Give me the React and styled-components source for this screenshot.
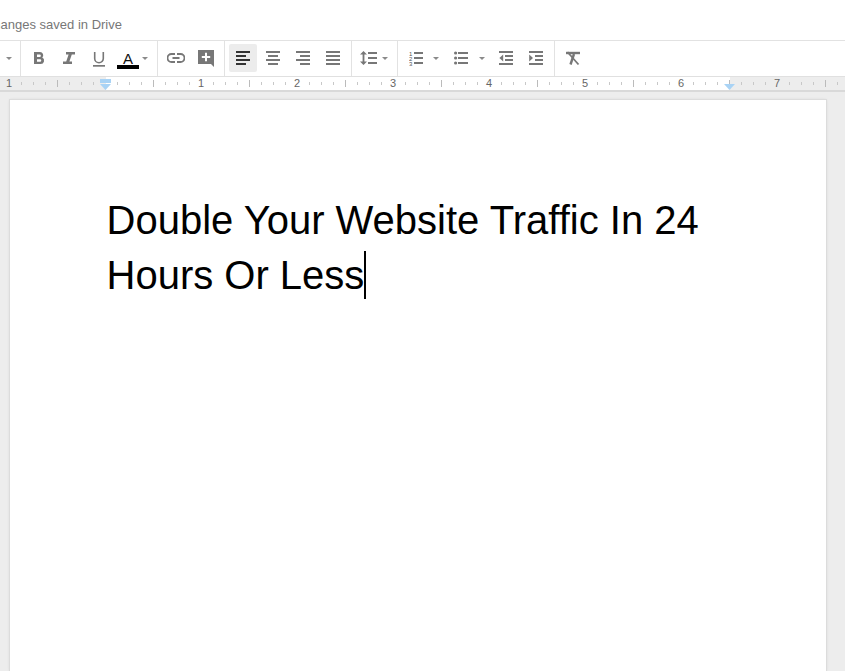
import React from "react";
import styled, { createGlobalStyle } from "styled-components";

const Global = createGlobalStyle`
  html, body { margin: 0; padding: 0; background: #ededed; overflow: hidden; }
  body { font-family: "Liberation Sans", Arial, sans-serif; }
`;
const Shell = styled.div`
  width: 845px; height: 671px; display: flex; flex-direction: column; overflow: hidden;
`;
const Header = styled.header`
  height: 40px; flex: none; background: #fff; border-bottom: 1px solid #e2e2e2;
  display: flex; align-items: center;
`;
const SaveStatus = styled.div`
  width: 122px; flex: none; overflow: hidden; display: flex; justify-content: flex-end;
  white-space: nowrap; font-size: 13px; color: #777; padding-top: 8px;
`;
const Toolbar = styled.div`
  height: 35px; flex: none; background: #fff; display: flex; align-items: stretch;
  border-bottom: 1px solid #e0e0e0;
`;
const Group = styled.div`
  width: ${p => p.$w}px; flex: none; box-sizing: border-box; display: flex; align-items: center;
  gap: ${p => p.$gap || 0}px; padding: 0 0 1px ${p => p.$pad || 0}px; border-right: 1px solid #e2e2e2;
  &:last-child { border-right: 0; }
`;
const Tool = styled.button`
  width: ${p => p.$w || 30}px; height: 28px; flex: none; padding: 0; border: 0; border-radius: 2px;
  margin-left: ${p => p.$ml || 0}px;
  background: ${p => p.$active ? "#ececec" : "transparent"};
  display: flex; align-items: center; justify-content: center;
`;
const Caret = styled.span`
  width: 0; height: 0; flex: none; margin-left: ${p => p.$ml || 0}px;
  border-left: 3.5px solid transparent; border-right: 3.5px solid transparent; border-top: 3.5px solid #8a8a8a;
`;
const Ruler = styled.div`
  height: 13px; flex: none; position: relative; overflow: hidden;
  background: linear-gradient(to right, #ededed 106px, #fff 106px, #fff 730px, #ededed 730px);
  border-bottom: 2px solid #d9d9d9;
`;
const RulerNum = styled.span`
  position: absolute; top: 0; transform: translateX(-50%); font-size: 11px; line-height: 13px; color: #666;
`;
const Ticks = styled.svg`
  position: absolute; left: 0; top: 0;
`;
const Marker = styled.svg`
  position: absolute; top: 2px; left: ${p => p.$left}px;
`;
const Canvas = styled.main`
  flex: 1; min-height: 0; background: #ededed; padding: 8px 19px 0 10px;
`;
const Page = styled.section`
  height: 100%; box-sizing: border-box; background: #fff;
  box-shadow: 0 0 0 1px #dcdcdc, 0 0 3px rgba(0,0,0,.15);
  padding: 93px 96px 0 96.5px;
`;
const Title = styled.h1`
  margin: 0; font-weight: 400; font-size: 40px; line-height: 55px; color: #000;
  font-variant-ligatures: none;
`;
const Cursor = styled.span`
  display: inline-block; width: 2px; height: 48px; background: #000; vertical-align: -10px; margin-left: -0.5px;
`;

const G = "#777";
const Icon = ({ w = 18, h = 18, children }) => (
  <svg width={w} height={h} viewBox={`0 0 ${w} ${h}`} fill="none">{children}</svg>
);
const Lines = ({ rows, color = G }) => (
  <Icon>
    {rows.map(([x, w], i) => <rect key={i} x={x} y={2 + i * 4} width={w} height="2" fill={color} />)}
  </Icon>
);
const Rows = ({ x, w, ys }) => ys.map(y => <rect key={y} x={x} y={y} width={w} height="2" fill={G} />);

const Bold = () => <Icon><path d="M4 3h6a3.3 3.3 0 0 1 2.3 5.6A3.4 3.4 0 0 1 10.7 15H4zM7 5.4v2.5h2.6a1.25 1.25 0 0 0 0-2.5zM7 10.2v2.5h3a1.25 1.25 0 0 0 0-2.5z" fill={G} fillRule="evenodd" /></Icon>;
const Italic = () => <Icon><path d="M6 3h9v2.4h-3.2l-2.4 7.2H12V15H3v-2.4h3.2l2.4-7.2H6z" fill={G} /></Icon>;
const Underline = () => <Icon><path d="M4.7 3v6.5a4.3 4.3 0 0 0 8.6 0V3" stroke={G} strokeWidth="1.6" /><rect x="3" y="16" width="12" height="1.7" fill={G} /></Icon>;
const Link = () => <Icon><path d="M8 5H4.5a4 4 0 0 0 0 8H8M10 5h3.5a4 4 0 0 1 0 8H10M5.5 9h7" stroke={G} strokeWidth="1.8" /></Icon>;
const Comment = () => <Icon w={16} h={18}><path d="M0 1h16v17l-3-3H0z" fill={G} /><path d="M7 3.8h2V7h3.2v2H9v3.2H7V9H3.8V7H7z" fill="#fff" /></Icon>;
const LineSpacing = () => <Icon w={19} h={18}><path d="M4.5 4v10" stroke={G} strokeWidth="1.8" /><path d="M1 5.5 4.5 2 8 5.5zM1 12.5 4.5 16 8 12.5z" fill={G} /><Rows x={9} w={9} ys={[3, 8, 13]} /></Icon>;
const Numbered = () => (
  <Icon w={16} h={16}>
    <text fontFamily="Liberation Sans, sans-serif" fontSize="6" fill="#555">
      <tspan x="0" y="5.5">1</tspan><tspan x="0" y="10.5">2</tspan><tspan x="0" y="15.5">3</tspan>
    </text>
    <Rows x={5} w={9} ys={[2, 7, 12]} />
  </Icon>
);
const Bulleted = () => <Icon w={16} h={16}>{[3, 8, 13].map(y => <circle key={y} cx="1.6" cy={y} r="1.6" fill={G} />)}<Rows x={4} w={10} ys={[2, 7, 12]} /></Icon>;
const Indent = ({ dir }) => (
  <Icon w={15} h={16}>
    <Rows x={0} w={14} ys={[1, 13]} />
    <Rows x={6} w={8} ys={[5, 9]} />
    <path d={dir === "out" ? "M4.2 4.5v7L.4 8z" : "M.2 4.5v7L4 8z"} fill={G} />
  </Icon>
);
const ClearFormat = () => (
  <Icon>
    <path d="M2 4h14" stroke={G} strokeWidth="2.4" />
    <path d="M10 5 6.5 15.5" stroke={G} strokeWidth="2.4" />
    <path d="M3.5 3 14.5 15.5" stroke={G} strokeWidth="1.8" />
  </Icon>
);
const TextColor = () => (
  <svg width="22" height="21" viewBox="0 0 22 21">
    <text x="11" y="16" textAnchor="middle" fontFamily="Liberation Sans, sans-serif" fontSize="15" fill="#111">A</text>
    <rect x="0" y="17" width="22" height="4" fill="#000" />
  </svg>
);

const inches = [[8, "1"], [200, "1"], [296, "2"], [392, "3"], [488, "4"], [584, "5"], [680, "6"], [776, "7"]];
const ticks = Array.from({ length: 71 }, (_, i) => 9 + i * 12).filter(x => (x - 9) % 96 !== 0 && x !== 105);

export default function App() {
  return (
    <Shell>
      <Global />
      <Header><SaveStatus>All changes saved in Drive</SaveStatus></Header>
      <Toolbar>
        <Group $w={21} $pad={6}><Caret /></Group>
        <Group $w={137} $pad={3}>
          <Tool><Bold /></Tool>
          <Tool><Italic /></Tool>
          <Tool><Underline /></Tool>
          <Tool $w={28}><TextColor /></Tool>
          <Caret />
        </Group>
        <Group $w={67} $pad={3}>
          <Tool><Link /></Tool>
          <Tool><Comment /></Tool>
        </Group>
        <Group $w={127} $pad={4} $gap={2}>
          <Tool $w={28} $active><Lines rows={[[2, 14], [2, 10], [2, 14], [2, 10]]} color="#333" /></Tool>
          <Tool $w={28}><Lines rows={[[2, 14], [4, 10], [2, 14], [4, 10]]} /></Tool>
          <Tool $w={28}><Lines rows={[[2, 14], [6, 10], [2, 14], [6, 10]]} /></Tool>
          <Tool $w={28}><Lines rows={[[2, 14], [2, 14], [2, 14], [2, 14]]} /></Tool>
        </Group>
        <Group $w={46} $pad={7}>
          <Tool $w={19}><LineSpacing /></Tool>
          <Caret $ml={4} />
        </Group>
        <Group $w={157} $pad={8}>
          <Tool $w={22}><Numbered /></Tool>
          <Caret $ml={5} />
          <Tool $w={22} $ml={12}><Bulleted /></Tool>
          <Caret $ml={6} />
          <Tool $w={15} $ml={14}><Indent dir="out" /></Tool>
          <Tool $w={15} $ml={15}><Indent dir="in" /></Tool>
        </Group>
        <Group $pad={9} $w={290}><Tool $w={18}><ClearFormat /></Tool></Group>
      </Toolbar>
      <Ruler>
        <Ticks width="845" height="13">
          {ticks.map(x => {
            const major = (x - 57) % 96 === 0;
            return <rect key={x} x={x} y={major ? 3 : 5} width="1" height={major ? 7 : 3} fill={major ? "#bbb" : "#c8c8c8"} />;
          })}
        </Ticks>
        {inches.map(([x, n]) => <RulerNum key={x} style={{ left: x + 1 }}>{n}</RulerNum>)}
        <Marker $left={100} width="11" height="12"><rect width="11" height="4" fill="#a9d3f5" /><path d="M0 5h11l-5.5 6z" fill="#a9d3f5" /></Marker>
        <Marker $left={724} width="11" height="12"><path d="M0 5h11l-5.5 6z" fill="#a9d3f5" /></Marker>
      </Ruler>
      <Canvas>
        <Page>
          <Title>Double Your Website Traffic In 24 Hours Or Less<Cursor /></Title>
        </Page>
      </Canvas>
    </Shell>
  );
}
